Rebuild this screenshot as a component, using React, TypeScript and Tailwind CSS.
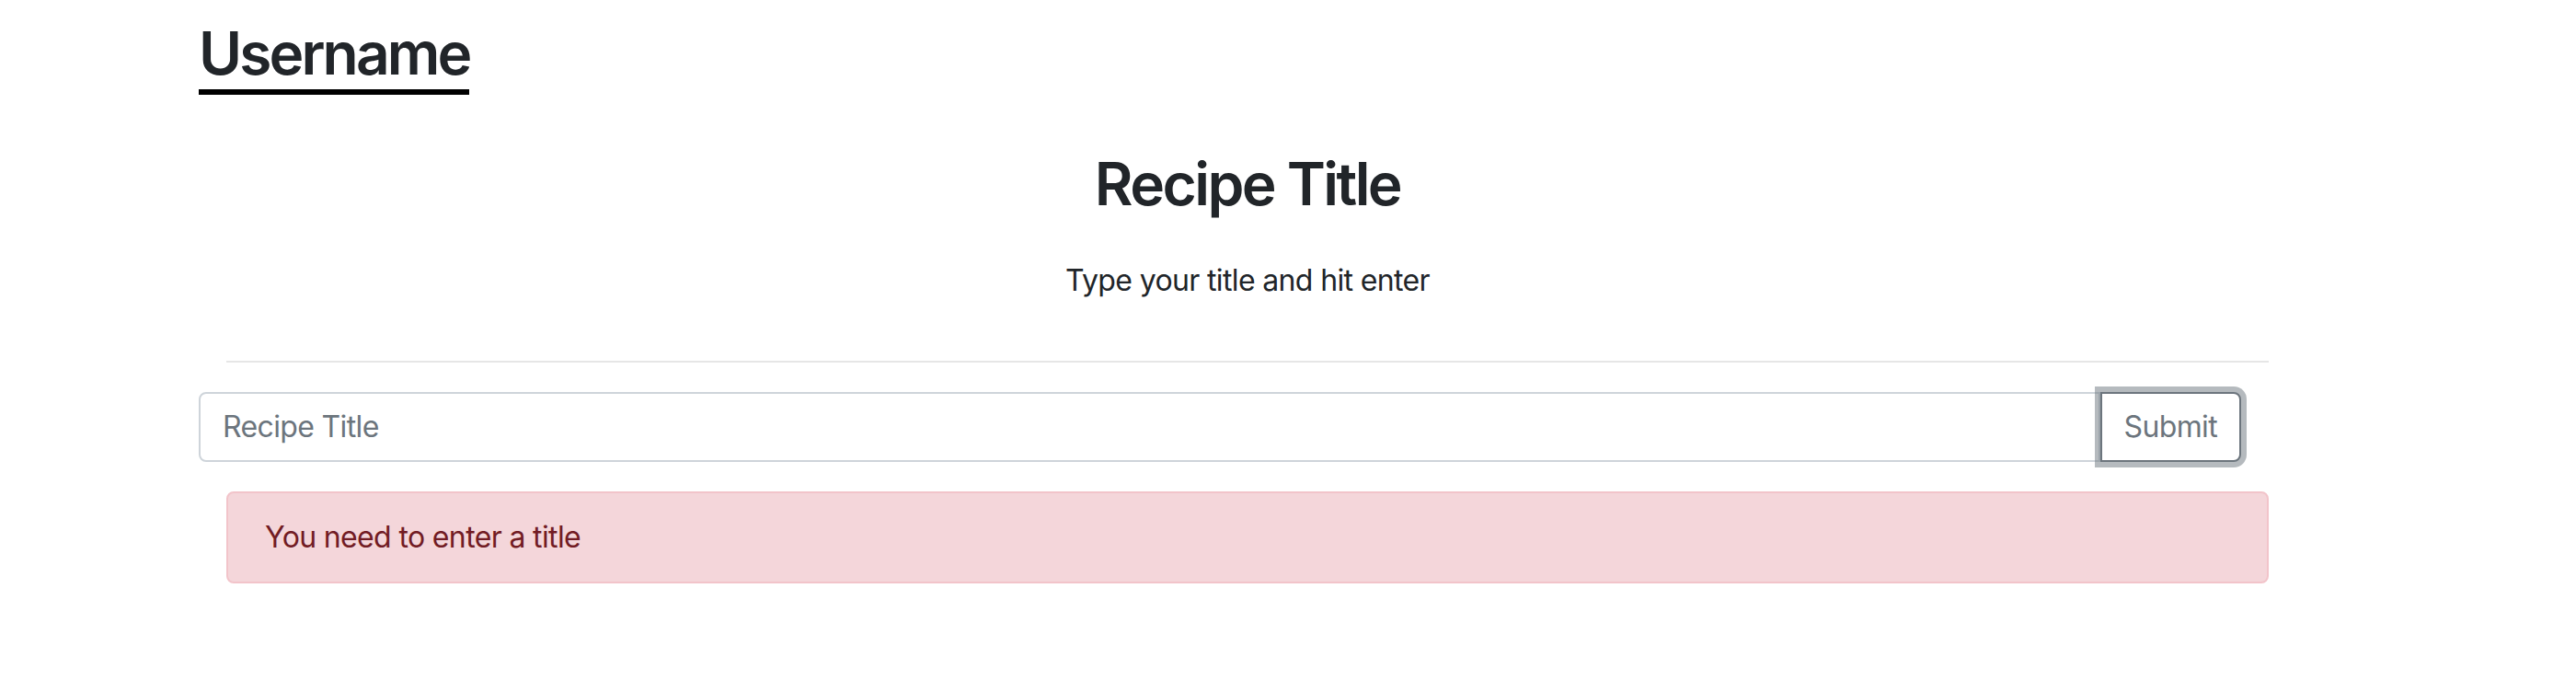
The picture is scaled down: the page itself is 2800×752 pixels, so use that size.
import React, { useState } from "react";

const App = () => {
  const [title, setTitle] = useState("");

  return (
    <main className="min-h-screen bg-white text-[#212529] font-['Inter','Liberation_Sans',sans-serif]">
      <div className="ml-[246px] w-[2220px] pt-[20px]">
        <div className="-ml-[30px]">
          <h2 className="inline-block border-b-[6px] border-black text-[64px] leading-[76.8px] font-semibold tracking-[-0.045em]">
            Username
          </h2>
        </div>

        <div className="text-center mt-[59px]">
          <h1 className="text-[64px] leading-[76.8px] font-semibold tracking-[-0.04em]">Recipe Title</h1>
          <p className="mt-[42px] text-[32px] leading-[48px] tracking-[-0.02em]">Type your title and hit enter</p>
        </div>

        <hr className="mt-[63px] border-t-2 border-[#e6e6e6]" />

        <form className="-ml-[30px] w-[2220px] flex mt-[32px]" onSubmit={(e) => e.preventDefault()}>
          <input
            value={title}
            onChange={(e) => setTitle(e.target.value)}
            placeholder="Recipe Title"
            className="flex-1 h-[76px] px-[24px] text-[32px] tracking-[-0.02em] border-2 border-[#ced4da] rounded-l-[8px] placeholder:text-[#6c757d] outline-none"
          />
          <button
            type="submit"
            className="h-[76px] px-[24px] text-[32px] tracking-[-0.02em] text-[#6c757d] border-2 border-[#6c757d] rounded-r-[8px] bg-white shadow-[0_0_0_6px_rgba(108,117,125,0.5)]"
          >
            Submit
          </button>
        </form>

        <div className="mt-[32px] px-[40px] py-[24px] bg-[#f4d6da] border-2 border-[#f2c4ca] rounded-[8px] text-[#721c24] text-[32px] leading-[48px] tracking-[-0.02em]">
          You need to enter a title
        </div>
      </div>
    </main>
  );
};

export default App;
